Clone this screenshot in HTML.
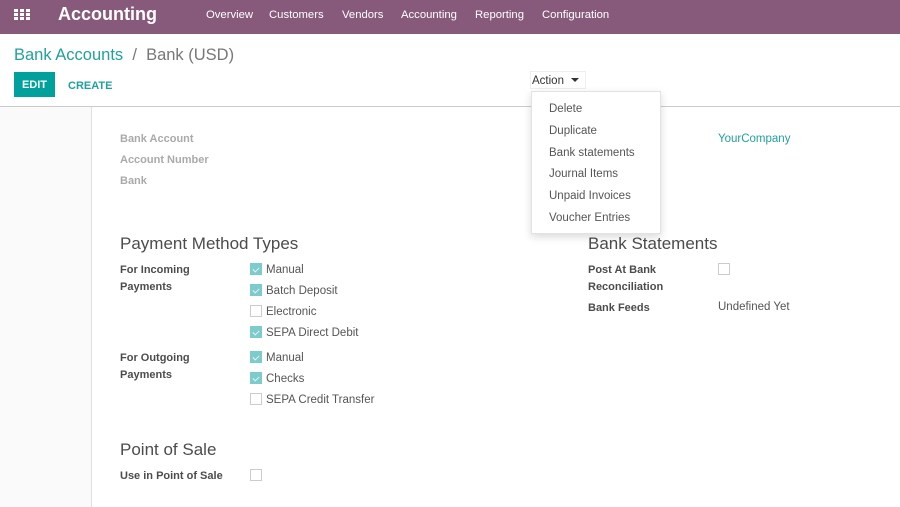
<!DOCTYPE html>
<html><head><meta charset="utf-8"><style>
*{margin:0;padding:0;box-sizing:border-box}
body{width:900px;height:507px;overflow:hidden;background:#fff;font-family:"Liberation Sans",sans-serif;position:relative;color:#4c4c4c}
.a{position:absolute;white-space:nowrap}
.nav{position:absolute;left:0;top:0;width:900px;height:34px;background:#875a7b}
.nav .m{color:#fff;font-size:11.3px;top:9px}
.lbl{font-size:11px;font-weight:bold;color:#4c4c4c;line-height:17px}
.gl{font-size:11px;font-weight:bold;color:#aaa}
.v{font-size:11.5px;color:#555}
.h{font-size:17px;color:#4c4c4c}
.cb{position:absolute;width:12px;height:12px;border:1px solid #ccc;background:#fff}
.cb.on{background:#7dcbcb;border-color:#7dcbcb}
.cb.on:after{content:"";position:absolute;left:3px;top:2px;width:3px;height:5px;border:solid #e8f7f7;border-width:0 1px 1px 0;transform:rotate(45deg)}
.dd{font-size:11.5px;color:#555}
</style></head><body>
<div class="nav">
  <div class="a" style="left:14px;top:9px;width:16px;height:12px;display:grid;grid-template-columns:repeat(3,4px);grid-template-rows:repeat(3,3px);gap:1px 2px">
    <i style="background:#fff"></i><i style="background:#fff"></i><i style="background:#fff"></i><i style="background:#fff"></i><i style="background:#fff"></i><i style="background:#fff"></i><i style="background:#fff"></i><i style="background:#fff"></i><i style="background:#fff"></i>
  </div>
  <div class="a" style="left:58px;top:4px;color:#fff;font-size:18px;font-weight:bold">Accounting</div>
  <div class="a m" style="left:206px">Overview</div>
  <div class="a m" style="left:269px">Customers</div>
  <div class="a m" style="left:342px">Vendors</div>
  <div class="a m" style="left:401px">Accounting</div>
  <div class="a m" style="left:475px">Reporting</div>
  <div class="a m" style="left:542px">Configuration</div>
</div>
<div class="a" style="left:14px;top:46px;font-size:16.5px"><span style="color:#21a09e">Bank Accounts</span><span style="color:#777"> &nbsp;/&nbsp; Bank (USD)</span></div>
<div class="a" style="left:14px;top:72px;width:41px;height:25px;background:#00a09d;color:#fff;font-size:11px;font-weight:bold;text-align:center;line-height:26px">EDIT</div>
<div class="a" style="left:68px;top:80px;color:#21a09e;font-size:11px;font-weight:bold">CREATE</div>
<div class="a" style="left:530px;top:71px;width:56px;height:18px;border:1px solid #eee;font-size:11.5px;color:#333;padding:3px 0 0 1px">Action <span style="display:inline-block;width:0;height:0;border-left:4px solid transparent;border-right:4px solid transparent;border-top:4px solid #333;vertical-align:2px;margin-left:4px"></span></div>
<div class="a" style="left:0;top:106px;width:900px;height:1px;background:#ccc"></div>
<div class="a" style="left:0;top:107px;width:92px;height:400px;background:#fafafa;border-right:1px solid #dde"></div>
<div class="gl a" style="left:120px;top:133px">Bank Account</div>
<div class="gl a" style="left:120px;top:154px">Account Number</div>
<div class="gl a" style="left:120px;top:175px">Bank</div>
<div class="a" style="left:718px;top:133px;color:#21a09e;font-size:11.5px">YourCompany</div>
<div class="a h" style="left:120px;top:234px">Payment Method Types</div>
<div class="a lbl" style="left:120px;top:262px">For Incoming<br>Payments</div>
<div class="cb on" style="left:250px;top:263px"></div><div class="a v" style="left:266px;top:264px">Manual</div>
<div class="cb on" style="left:250px;top:284px"></div><div class="a v" style="left:266px;top:285px">Batch Deposit</div>
<div class="cb" style="left:250px;top:305px"></div><div class="a v" style="left:266px;top:306px">Electronic</div>
<div class="cb on" style="left:250px;top:326px"></div><div class="a v" style="left:266px;top:327px">SEPA Direct Debit</div>
<div class="a lbl" style="left:120px;top:350px">For Outgoing<br>Payments</div>
<div class="cb on" style="left:250px;top:351px"></div><div class="a v" style="left:266px;top:352px">Manual</div>
<div class="cb on" style="left:250px;top:372px"></div><div class="a v" style="left:266px;top:373px">Checks</div>
<div class="cb" style="left:250px;top:393px"></div><div class="a v" style="left:266px;top:394px">SEPA Credit Transfer</div>
<div class="a h" style="left:120px;top:440px">Point of Sale</div>
<div class="a lbl" style="left:120px;top:468px">Use in Point of Sale</div>
<div class="cb" style="left:250px;top:469px"></div>
<div class="a h" style="left:588px;top:234px">Bank Statements</div>
<div class="a lbl" style="left:588px;top:262px">Post At Bank<br>Reconciliation</div>
<div class="cb" style="left:718px;top:263px"></div>
<div class="a lbl" style="left:588px;top:300px">Bank Feeds</div>
<div class="a v" style="left:718px;top:301px">Undefined Yet</div>
<div class="a" style="left:531px;top:91px;width:130px;height:143px;background:#fff;border:1px solid #e2e2e2;box-shadow:0 3px 8px rgba(0,0,0,.15)">
  <div class="a dd" style="left:17px;top:11px">Delete</div>
  <div class="a dd" style="left:17px;top:33px">Duplicate</div>
  <div class="a dd" style="left:17px;top:55px">Bank statements</div>
  <div class="a dd" style="left:17px;top:76px">Journal Items</div>
  <div class="a dd" style="left:17px;top:98px">Unpaid Invoices</div>
  <div class="a dd" style="left:17px;top:120px">Voucher Entries</div>
</div>
</body></html>
